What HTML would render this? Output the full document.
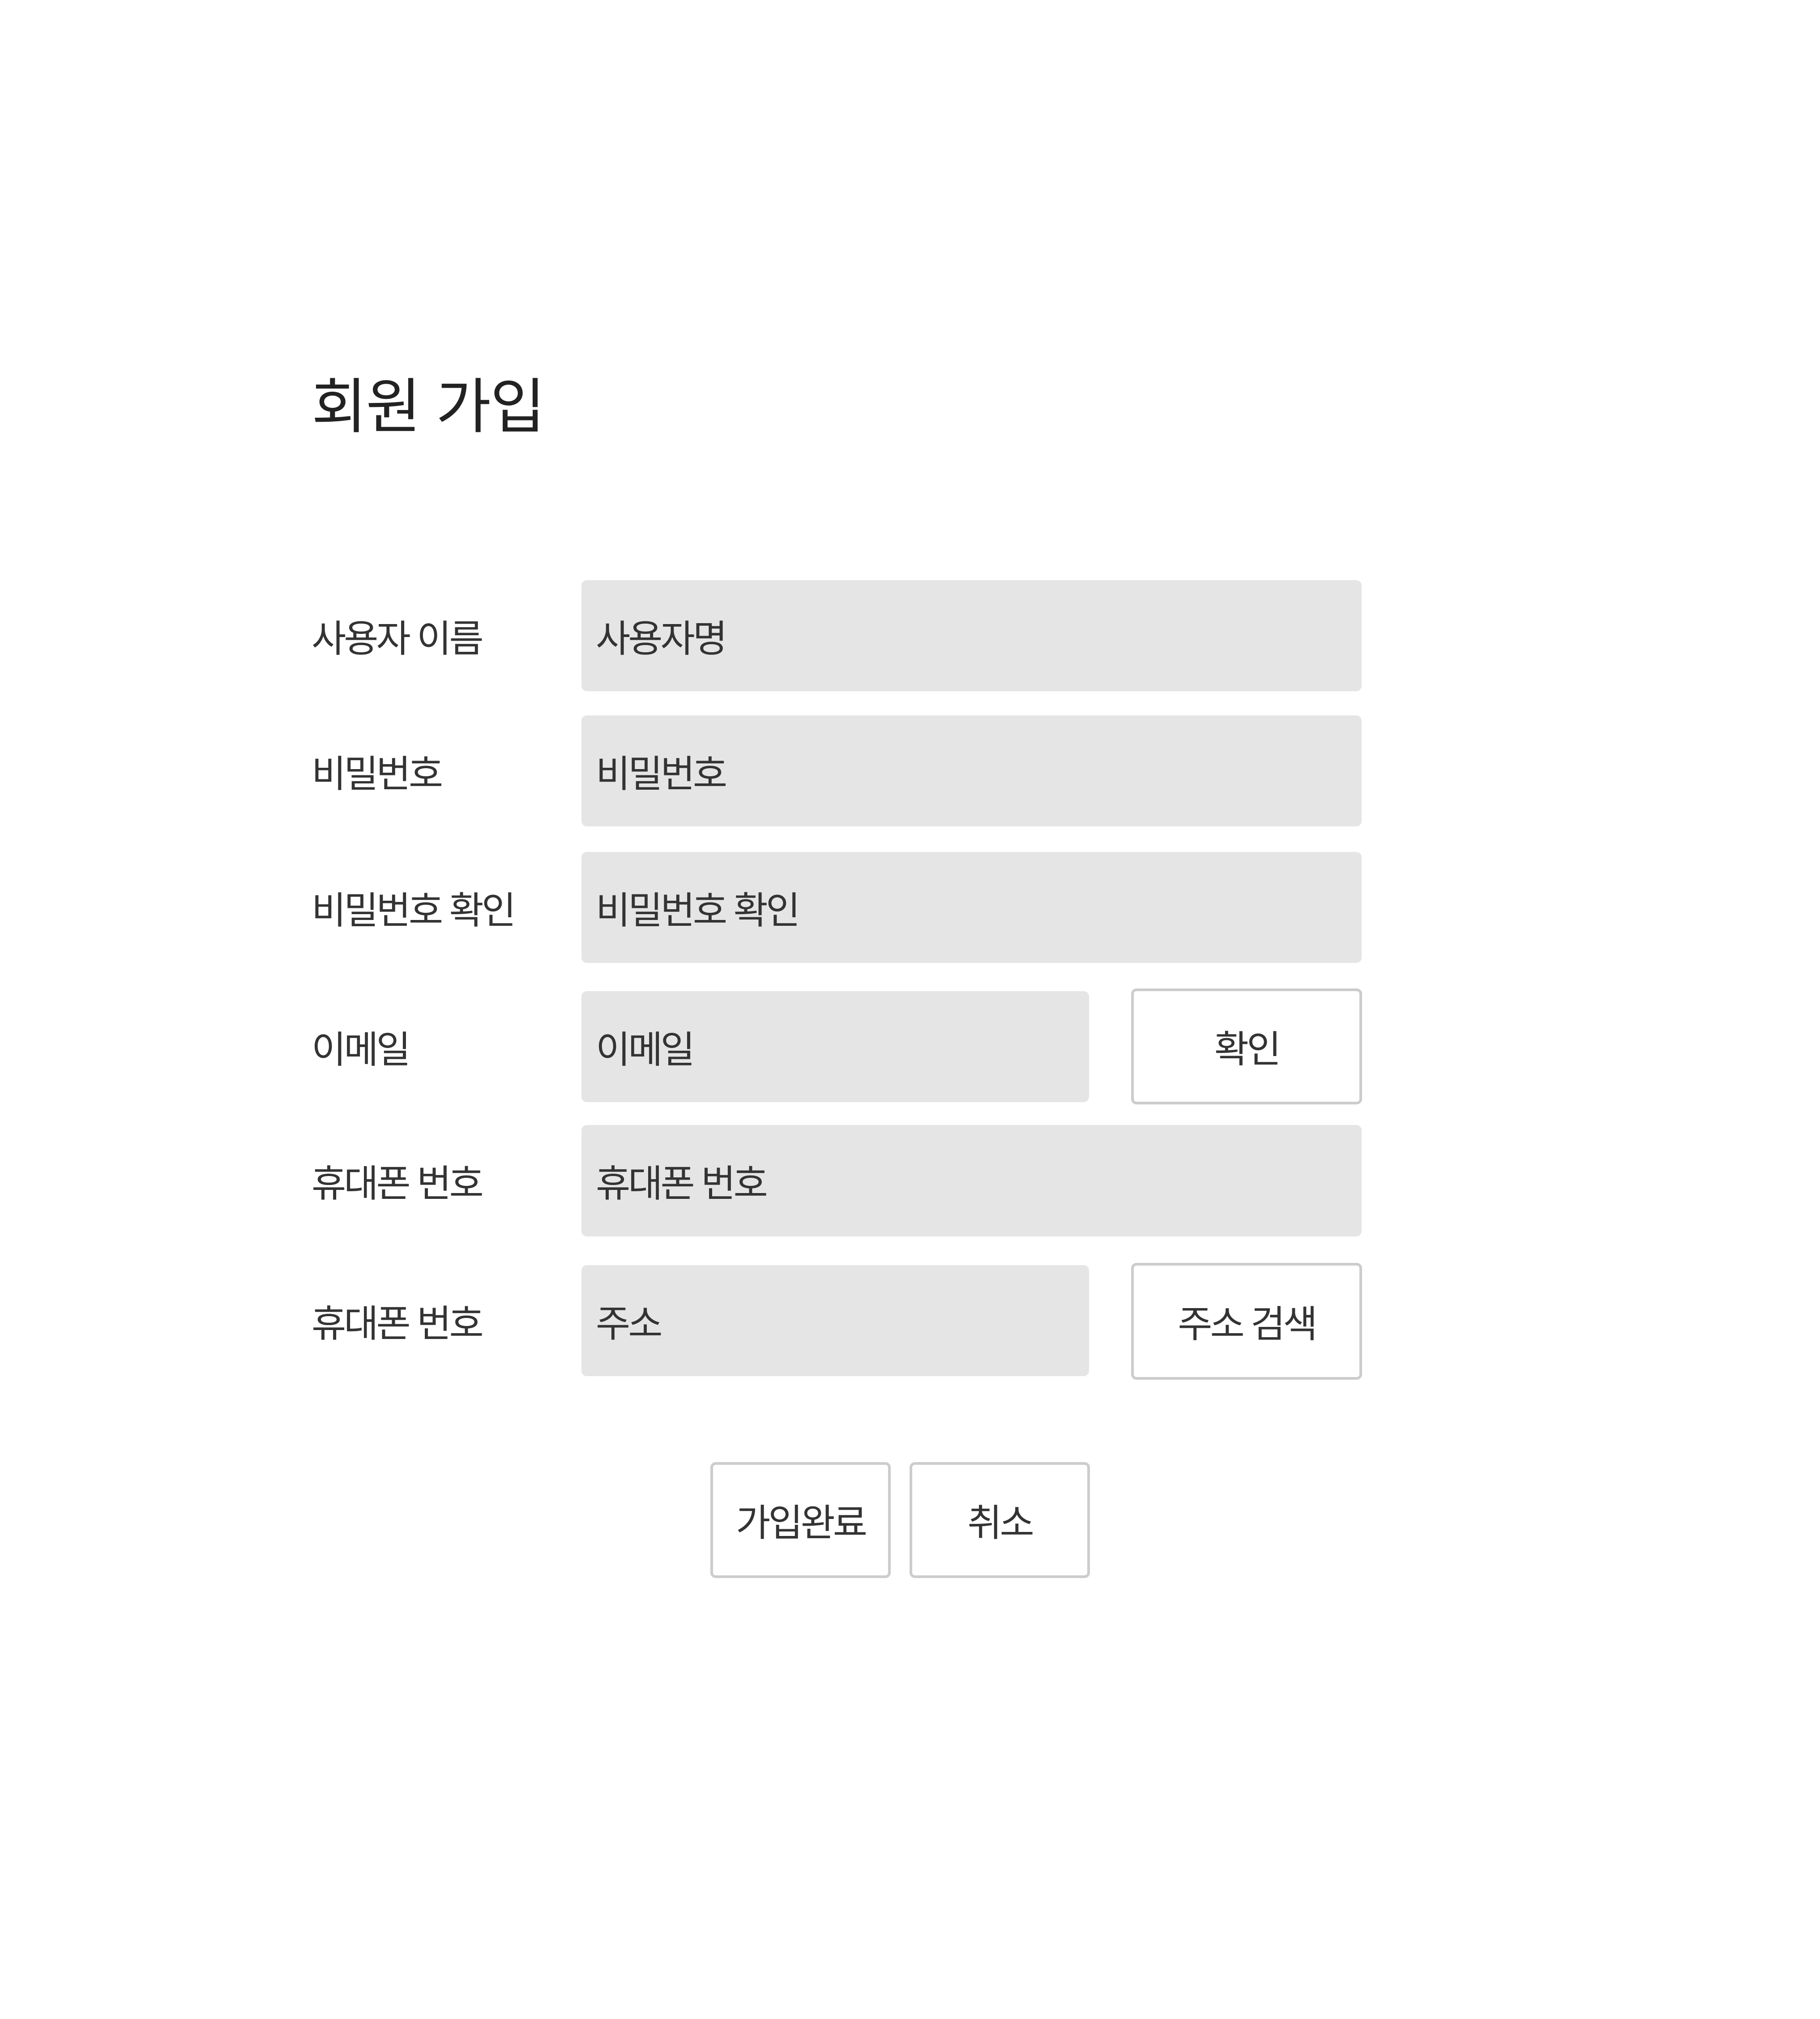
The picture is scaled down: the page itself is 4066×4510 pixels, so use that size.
<!DOCTYPE html>
<html><head><meta charset="utf-8"><style>
html,body{margin:0;padding:0;background:#fff;}
body{width:4066px;height:4510px;position:relative;overflow:hidden;font-family:"Liberation Sans","Noto Sans CJK KR",sans-serif;color:#333;}
.a{position:absolute;display:flex;align-items:center;box-sizing:border-box;}
.t{left:696px;top:817px;height:160px;font-size:134px;color:#222;letter-spacing:-2px;}
.l{left:696px;font-size:84px;letter-spacing:-5px;color:#333;}
.i{left:1299px;background:#e5e5e5;border-radius:12px;padding-left:32px;font-size:84px;letter-spacing:-5px;color:#333;}
.b{border:6px solid #ccc;border-radius:12px;background:#fff;justify-content:center;font-size:84px;letter-spacing:-5px;color:#333;}
</style></head><body>
<div class="a t">회원 가입</div>

<div class="a l" style="top:1296px;height:248px">사용자 이름</div>
<div class="a i" style="top:1296px;height:248px;width:1743px">사용자명</div>

<div class="a l" style="top:1598px;height:248px">비밀번호</div>
<div class="a i" style="top:1598px;height:248px;width:1743px">비밀번호</div>

<div class="a l" style="top:1903px;height:248px">비밀번호 확인</div>
<div class="a i" style="top:1903px;height:248px;width:1743px">비밀번호 확인</div>

<div class="a l" style="top:2214px;height:248px">이메일</div>
<div class="a i" style="top:2214px;height:248px;width:1134px">이메일</div>
<div class="a b" style="left:2527px;top:2208px;width:516px;height:259px">확인</div>

<div class="a l" style="top:2513px;height:249px">휴대폰 번호</div>
<div class="a i" style="top:2513px;height:249px;width:1743px">휴대폰 번호</div>

<div class="a l" style="top:2826px;height:248px">휴대폰 번호</div>
<div class="a i" style="top:2826px;height:248px;width:1134px">주소</div>
<div class="a b" style="left:2527px;top:2821px;width:516px;height:261px">주소 검색</div>

<div class="a b" style="left:1587px;top:3266px;width:403px;height:259px">가입완료</div>
<div class="a b" style="left:2032px;top:3266px;width:403px;height:259px">취소</div>
</body></html>
